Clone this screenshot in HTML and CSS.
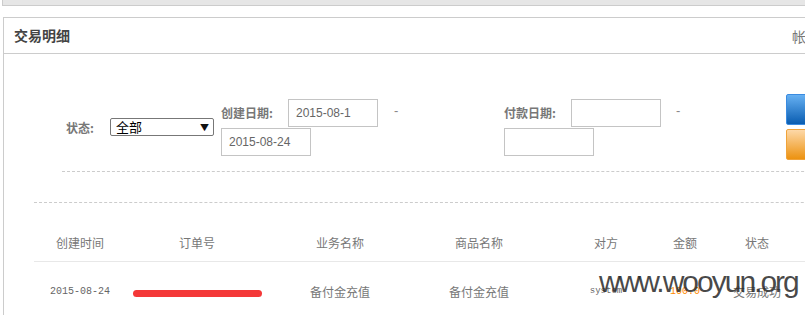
FILE: index.html
```html
<!DOCTYPE html>
<html lang="zh-CN">
<head>
<meta charset="utf-8">
<title>交易明细</title>
<link rel="stylesheet" href="styles.css">
</head>
<body>
<div class="topbar"></div>
<div class="panel">
  <div class="panel-head">
    <span class="title">交易明细</span>
    <span class="head-link">帐户余额</span>
  </div>
  <div class="filters">
    <div class="group group-status">
      <span class="label label-status">状态:</span>
      <span class="select-wrap"><select class="select"><option>全部</option></select></span>
    </div>
    <div class="group group-date group-create">
      <span class="label label-date">创建日期:</span>
      <input class="input" type="text" value="2015-08-1">
      <span class="dash">-</span>
      <input class="input" type="text" value="2015-08-24">
    </div>
    <div class="group group-date group-pay">
      <span class="label label-date">付款日期:</span>
      <input class="input" type="text" value="">
      <span class="dash dash-pay">-</span>
      <input class="input" type="text" value="">
    </div>
    <div class="buttons">
      <button class="btn btn-blue">搜索</button>
      <button class="btn btn-orange">下载</button>
    </div>
  </div>
  <div class="list">
    <table class="table">
      <colgroup>
        <col class="c1"><col class="c2"><col class="c3"><col class="c4"><col class="c5"><col class="c6"><col class="c7">
      </colgroup>
      <thead>
        <tr>
          <th>创建时间</th><th>订单号</th><th>业务名称</th><th>商品名称</th><th>对方</th><th>金额</th><th>状态</th>
        </tr>
      </thead>
      <tbody>
        <tr>
          <td class="mono">2015-08-24</td>
          <td><span class="redact"></span></td>
          <td>备付金充值</td>
          <td>备付金充值</td>
          <td class="mono small">system</td>
          <td class="mono amount">100.0</td>
          <td>交易成功</td>
        </tr>
      </tbody>
    </table>
  </div>
</div>
<div class="watermark">www.wooyun.org</div>
</body>
</html>
```
FILE: styles.css
```css
html, body {
  margin: 0;
  padding: 0;
  background: #fff;
  overflow: hidden;
  width: 805px;
  height: 315px;
}
body {
  font-family: "Noto Sans CJK SC", "Liberation Sans", sans-serif;
  font-size: 12px;
  color: #666;
  position: relative;
}
.topbar {
  margin-left: 2px;
  width: 900px;
  height: 5px;
  background: #e6e6e6;
  border-left: 1px solid #ccc;
  border-bottom: 1px solid #ccc;
  margin-bottom: 11px;
}
.panel {
  margin-left: 3px;
  width: 900px;
  height: 400px;
  border: 1px solid #ccc;
}
.panel-head {
  display: flex;
  align-items: center;
  height: 35px;
  border-bottom: 1px solid #ccc;
  padding: 0 0 0 10px;
}
.title {
  flex: 0 0 778px;
  font-size: 14px;
  font-weight: bold;
  color: #444;
  line-height: 35px;
}
.head-link {
  font-size: 14px;
  color: #777;
  white-space: nowrap;
}
.filters {
  display: flex;
  align-items: center;
  margin-left: 58px;
  margin-top: 40px;
  padding-bottom: 11px;
  border-bottom: 1px dashed #ccc;
}
.group {
  display: flex;
  align-items: center;
  flex-shrink: 0;
}
.group-status {
  margin-left: 4px;
  margin-right: 7px;
}
.label {
  font-weight: bold;
  color: #777;
  font-size: 12px;
  white-space: nowrap;
}
.label-status {
  width: 44px;
}
.select-wrap {
  position: relative;
  display: inline-block;
}
.select-wrap::after {
  content: "\25BC";
  position: absolute;
  right: 5px;
  top: 3px;
  font-size: 9px;
  color: #111;
  pointer-events: none;
}
.select {
  appearance: none;
  -webkit-appearance: none;
  width: 104px;
  height: 18px;
  border: 1px solid #777;
  border-radius: 2px;
  background: #fff;
  font-family: "Noto Sans CJK SC", sans-serif;
  font-size: 13px;
  line-height: 16px;
  color: #000;
  padding: 0 0 0 5px;
  margin: 0;
  display: block;
}
.group-date {
  flex-wrap: wrap;
  row-gap: 1px;
}
.group-create {
  width: 279px;
  margin-right: 4px;
}
.group-pay {
  width: 276px;
  margin-right: 6px;
}
.label-date {
  width: 67px;
}
.input {
  box-sizing: border-box;
  width: 90px;
  height: 28px;
  border: 1px solid #c4c4c4;
  padding: 0 0 0 7px;
  margin: 0;
  font-family: "Liberation Sans", Arial, sans-serif;
  font-size: 12px;
  color: #666;
  outline: none;
}
.dash {
  margin: 0 20px 0 16px;
  color: #888;
  font-family: "Liberation Sans", sans-serif;
  font-size: 13px;
  position: relative;
  top: -2px;
}
.dash-pay {
  margin-left: 15px;
}
.buttons {
  display: flex;
  flex-direction: column;
  gap: 4px;
  flex-shrink: 0;
}
.btn {
  box-sizing: border-box;
  width: 70px;
  height: 31px;
  border-radius: 2px;
  color: #fff;
  font-family: "Noto Sans CJK SC", sans-serif;
  font-size: 13px;
  padding: 0 16px 0 0;
  text-align: right;
}
.btn-blue {
  border: 1px solid #3a8be0;
  background: linear-gradient(#66b0f2, #0a5db1);
}
.btn-orange {
  border: 1px solid #f0a33a;
  background: linear-gradient(#fdd8a8, #ec9210);
}
.list {
  margin-left: 30px;
  margin-top: 30px;
  border-top: 1px dashed #ccc;
  padding-top: 20px;
}
.table {
  width: 776px;
  table-layout: fixed;
  border-collapse: collapse;
}
.c1 { width: 92px; }
.c2 { width: 142px; }
.c3 { width: 144px; }
.c4 { width: 134px; }
.c5 { width: 120px; }
.c6 { width: 38px; }
.c7 { width: 106px; }
.table th {
  height: 38px;
  padding: 0;
  font-weight: normal;
  color: #777;
  font-size: 12px;
  border-bottom: 1px solid #e8e8e8;
  text-align: center;
}
.table td {
  height: 58px;
  padding: 0;
  text-align: center;
  color: #777;
  font-size: 12px;
}
.table td.mono {
  font-family: "Liberation Mono", monospace;
  font-size: 10px;
  color: #666;
}
.table td.small {
  font-size: 9px;
}
.table td.amount {
  color: #ff8a00;
}
.redact {
  display: inline-block;
  width: 129px;
  height: 7px;
  border-radius: 4px;
  background: #f43838;
  vertical-align: middle;
}
.watermark {
  position: absolute;
  left: 599px;
  top: 267px;
  font-family: "Liberation Sans", Arial, sans-serif;
  font-size: 30px;
  line-height: 1;
  letter-spacing: -2px;
  color: rgba(40, 40, 40, 0.85);
  white-space: nowrap;
}
```
